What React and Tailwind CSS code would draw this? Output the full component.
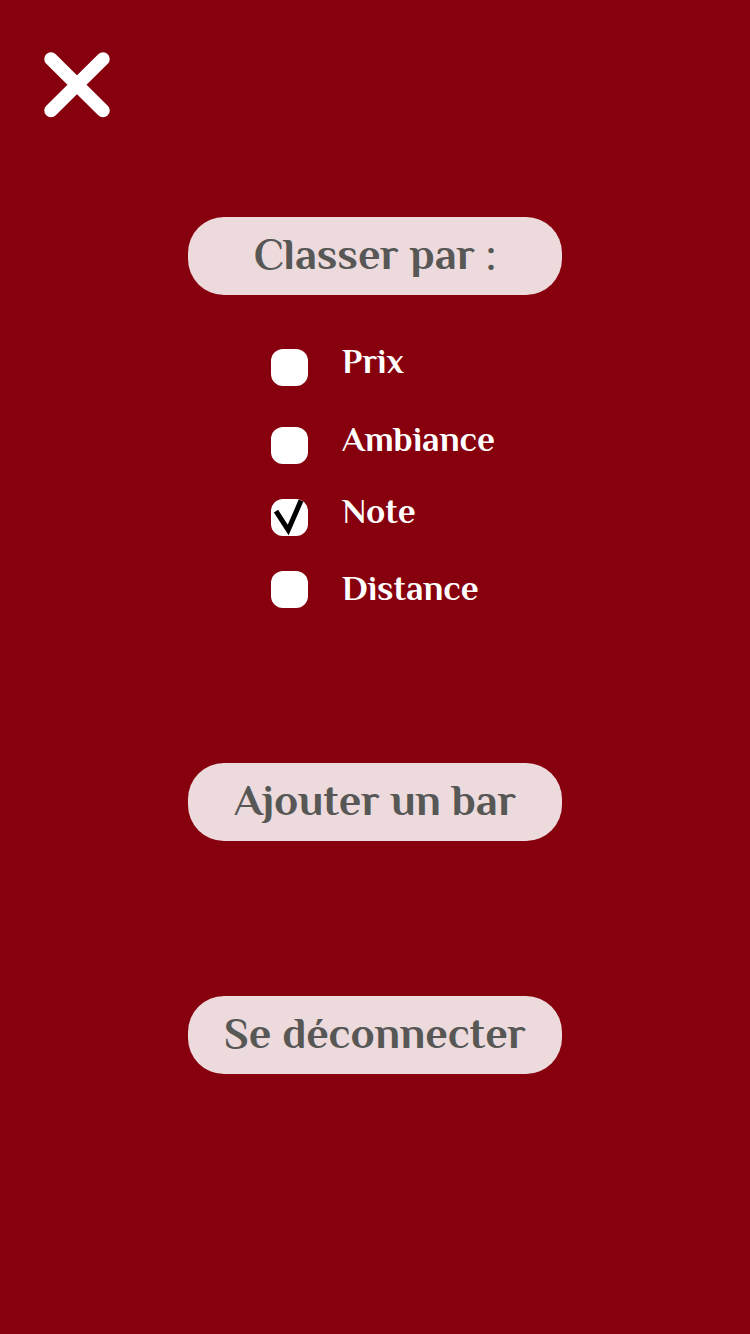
import { useState } from "react";

const PILL =
  "flex h-[78px] w-[374px] items-center justify-center rounded-[36px] bg-[#eddadc] pb-1 text-[44px] font-bold whitespace-nowrap text-[#575756]";

const OPTIONS = [
  { id: "prix", label: "Prix", row: "mb-[41px]", text: "leading-6" },
  { id: "ambiance", label: "Ambiance", row: "mb-[35px]", text: "leading-6" },
  { id: "note", label: "Note", row: "mb-[35px]", text: "leading-6" },
  { id: "distance", label: "Distance", row: "", text: "leading-[34px]" },
];

function SortOption({ option, checked, onToggle }) {
  return (
    <div className={`flex items-start gap-[34px] ${option.row}`}>
      <span className="relative block size-[37px] shrink-0">
        <input
          id={option.id}
          type="checkbox"
          checked={checked}
          onChange={onToggle}
          className="block size-full cursor-pointer appearance-none rounded-[12px] bg-white"
        />
        {checked && (
          <svg
            viewBox="0 0 37 37"
            className="pointer-events-none absolute inset-0 size-full"
            fill="none"
            stroke="#000"
            strokeWidth="5"
            aria-hidden="true"
          >
            <path d="M5 12.2 L17.2 31 L30 1.6" strokeMiterlimit="10" />
          </svg>
        )}
      </span>
      <label
        htmlFor={option.id}
        className={`cursor-pointer text-[35px] font-bold text-white ${option.text}`}
      >
        {option.label}
      </label>
    </div>
  );
}

export default function App() {
  const [selected, setSelected] = useState(["note"]);

  const toggle = (id) =>
    setSelected((current) =>
      current.includes(id) ? current.filter((x) => x !== id) : [...current, id]
    );

  return (
    <main className="flex min-h-screen flex-col bg-[#87000d] px-11 pt-[52px] pb-16 font-['Philosopher','Liberation_Serif',serif]">
      <button type="button" aria-label="Fermer" className="size-[66px] cursor-pointer">
        <svg
          viewBox="0 0 66 66"
          className="size-full"
          stroke="#fff"
          strokeWidth="13.5"
          strokeLinecap="round"
          aria-hidden="true"
        >
          <path d="M7 7 L59 58.5 M59 7 L7 58.5" />
        </svg>
      </button>

      <div className="mt-[99px] flex flex-col items-center">
        <h1 className={PILL}>Classer par :</h1>
        <div className="mt-[54px] flex w-52 flex-col">
          {OPTIONS.map((option) => (
            <SortOption
              key={option.id}
              option={option}
              checked={selected.includes(option.id)}
              onToggle={() => toggle(option.id)}
            />
          ))}
        </div>
        <button type="button" className={`mt-[155px] cursor-pointer ${PILL}`}>
          Ajouter un bar
        </button>
        <button type="button" className={`mt-[155px] cursor-pointer ${PILL}`}>
          Se déconnecter
        </button>
      </div>
    </main>
  );
}
